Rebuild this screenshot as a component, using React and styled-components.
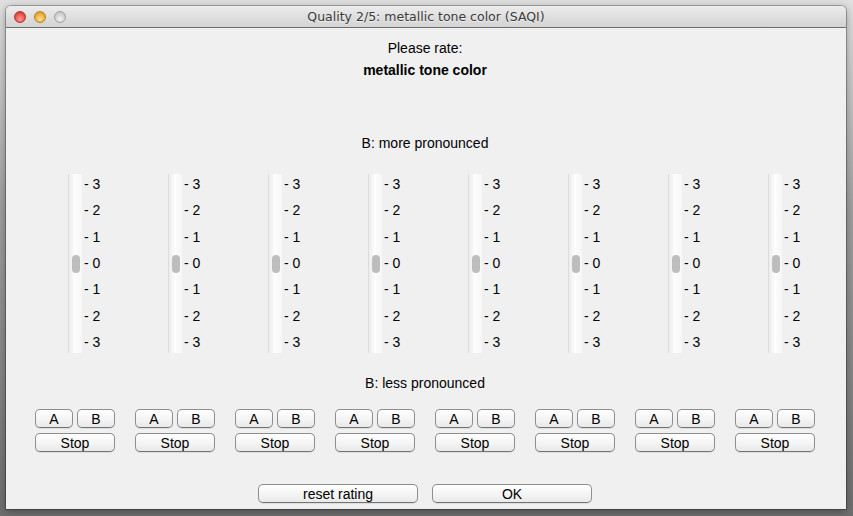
import React from "react";
import styled, { createGlobalStyle } from "styled-components";

const GlobalStyle = createGlobalStyle`
  html, body {
    margin: 0;
    padding: 0;
    height: 100%;
  }
  body {
    background: linear-gradient(#e0e0e0 0%, #a0a0a0 40%, #6e6e6e 100%);
    font-family: "Liberation Sans", Arial, sans-serif;
  }
`;

const Screen = styled.div`
  width: 853px;
  height: 516px;
  padding: 6px 7px 7px 6px;
  box-sizing: border-box;
`;

const Window = styled.div`
  width: 840px;
  height: 503px;
  display: flex;
  flex-direction: column;
  background: #f0f0f0;
  border-radius: 5px 5px 0 0;
  box-shadow: 0 0 0 1px rgba(0, 0, 0, 0.25), 0 2px 8px rgba(0, 0, 0, 0.35);
  overflow: hidden;
`;

const TitleBar = styled.div`
  position: relative;
  height: 22px;
  flex: none;
  display: flex;
  align-items: center;
  justify-content: center;
  background: linear-gradient(#ececec, #d3d3d3);
  border-bottom: 1px solid #6e6e6e;
  box-sizing: border-box;
  font-family: "DejaVu Sans", sans-serif;
  font-size: 12.5px;
  color: #3a3a3a;
  text-shadow: 0 1px 0 rgba(255, 255, 255, 0.6);
`;

const Lights = styled.div`
  position: absolute;
  left: 8px;
  top: 5px;
  display: flex;
  gap: 8px;
`;

const Light = styled.span`
  width: 12px;
  height: 12px;
  border-radius: 50%;
  box-sizing: border-box;
  border: 1px solid ${(p) => p.$edge};
  background: radial-gradient(circle at 50% 70%, ${(p) => p.$glow} 0%, ${(p) => p.$base} 70%);
`;

const Content = styled.div`
  flex: 1;
  display: flex;
  flex-direction: column;
  align-items: center;
  padding: 9px 21px 0 19px;
  color: #000;
  font-size: 14px;
`;

const Line = styled.div`
  line-height: 22px;
  font-weight: ${(p) => (p.$bold ? "bold" : "normal")};
`;

const Caption = styled.div`
  line-height: 16px;
  margin-top: ${(p) => p.$top}px;
`;

const Columns = styled.div`
  display: grid;
  grid-template-columns: repeat(8, 100px);
  margin-top: ${(p) => p.$top}px;
`;

const SliderCell = styled.div`
  display: grid;
  grid-template-columns: 1fr 14px 1fr;
  height: 179px;
`;

const Track = styled.div`
  position: relative;
  grid-column: 2;
  border-left: 1px solid #dcdcdc;
  background: linear-gradient(90deg, #ececec, #fdfdfd 45%, #f6f6f6);
`;

const Thumb = styled.div`
  position: absolute;
  left: 3px;
  top: 81px;
  width: 8px;
  height: 18px;
  border-radius: 4px;
  background: #bdbdbd;
`;

const Ticks = styled.div`
  grid-column: 3;
  display: flex;
  flex-direction: column;
  justify-content: space-between;
  padding: 3px 0 3px 2px;
`;

const Tick = styled.span`
  line-height: 15px;
`;

const ButtonCell = styled.div`
  display: flex;
  flex-direction: column;
  align-items: center;
  gap: 5px;
`;

const Pair = styled.div`
  display: flex;
  gap: 4px;
`;

const Button = styled.button`
  width: ${(p) => p.$w}px;
  height: 19px;
  padding: 0;
  font-family: "Liberation Sans", Arial, sans-serif;
  font-size: 14px;
  color: #000;
  background: linear-gradient(#ffffff, #f3f3f3 60%, #e9e9e9);
  border: 1px solid #8e8e8e;
  border-bottom-color: #747474;
  border-radius: 5px;
  box-shadow: 0 1px 0 rgba(0, 0, 0, 0.08);
  line-height: 16px;
`;

const Footer = styled.div`
  display: flex;
  gap: 14px;
  margin-top: 32px;
`;

const ticks = ["- 3", "- 2", "- 1", "- 0", "- 1", "- 2", "- 3"];
const cols = [0, 1, 2, 3, 4, 5, 6, 7];

export default function App() {
  return (
    <Screen>
      <GlobalStyle />
      <Window>
        <TitleBar>
          <Lights>
            <Light $base="#e0443e" $glow="#ff9a90" $edge="#b0312c" />
            <Light $base="#e2a432" $glow="#ffe08a" $edge="#b58025" />
            <Light $base="#c8c8c8" $glow="#f2f2f2" $edge="#a0a0a0" />
          </Lights>
          Quality 2/5: metallic tone color (SAQI)
        </TitleBar>
        <Content>
          <Line>Please rate:</Line>
          <Line $bold>metallic tone color</Line>
          <Caption $top={54}>B: more pronounced</Caption>
          <Columns $top={23}>
            {cols.map((c) => (
              <SliderCell key={c}>
                <Track>
                  <Thumb />
                </Track>
                <Ticks>
                  {ticks.map((t, i) => (
                    <Tick key={i}>{t}</Tick>
                  ))}
                </Ticks>
              </SliderCell>
            ))}
          </Columns>
          <Caption $top={22}>B: less pronounced</Caption>
          <Columns $top={18}>
            {cols.map((c) => (
              <ButtonCell key={c}>
                <Pair>
                  <Button $w={38}>A</Button>
                  <Button $w={38}>B</Button>
                </Pair>
                <Button $w={80}>Stop</Button>
              </ButtonCell>
            ))}
          </Columns>
          <Footer>
            <Button $w={160}>reset rating</Button>
            <Button $w={160}>OK</Button>
          </Footer>
        </Content>
      </Window>
    </Screen>
  );
}
